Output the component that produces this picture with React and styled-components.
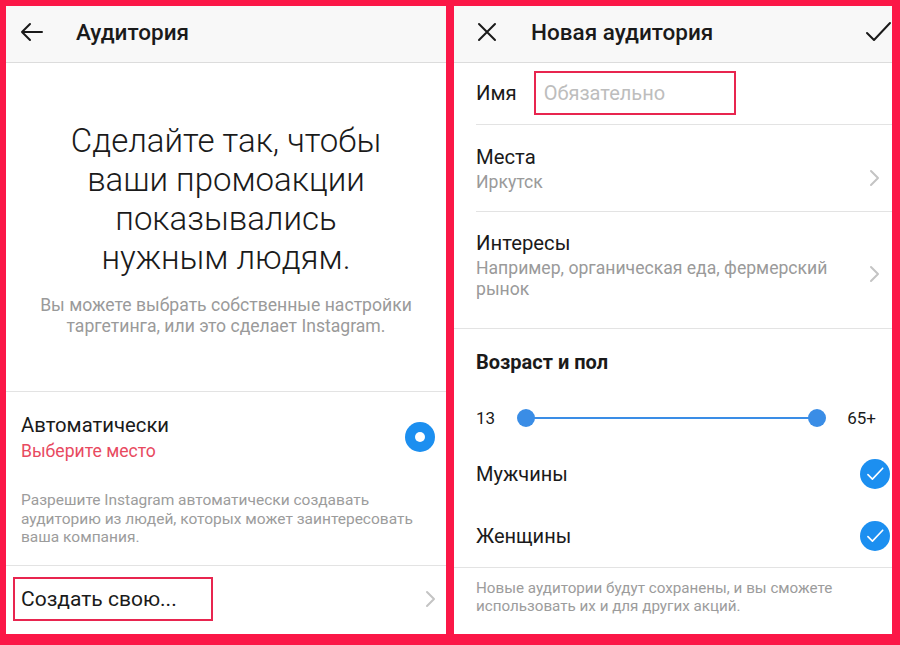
import React from 'react'
import styled, { createGlobalStyle } from 'styled-components'

const Global = createGlobalStyle`
  html, body { margin: 0; padding: 0; }
  body {
    background: #fb1747;
    font-family: Roboto, "Noto Sans", Arial, sans-serif;
    color: #262626;
  }
`

const Frame = styled.div`
  width: 900px;
  height: 645px;
  box-sizing: border-box;
  padding: 6px 8px 11px 6px;
  display: flex;
  gap: 8px;
  background: #fb1747;
`

const Panel = styled.div`
  width: ${(p) => p.w}px;
  background: #fff;
  display: flex;
  flex-direction: column;
  overflow: hidden;
`

const Header = styled.div`
  height: 57px;
  flex-shrink: 0;
  box-sizing: border-box;
  background: #f8f8f8;
  border-bottom: 1px solid #dcdcdc;
  display: flex;
  align-items: center;
  padding: 0 0 4px ${(p) => p.pl}px;
`

const Title = styled.div`
  font-size: 22.5px;
  font-weight: 500;
  color: #1a1a1a;
  margin-left: ${(p) => p.ml}px;
  flex: 1;
`

const Hero = styled.div`
  padding: 58px 16px 0;
  text-align: center;
  height: 329px;
  flex-shrink: 0;
  box-sizing: border-box;
  border-bottom: 1px solid #e3e3e3;
`

const Headline = styled.div`
  font-size: 33px;
  font-weight: 300;
  line-height: 39px;
  color: #1a1a1a;
  width: 340px;
  margin: 0 auto;
`

const Lead = styled.div`
  margin-top: 18px;
  font-size: 17.6px;
  line-height: 21px;
  color: #9a9a9a;
`

const AutoBlock = styled.div`
  height: 174px;
  flex-shrink: 0;
  box-sizing: border-box;
  padding: 20px 11px 0 15px;
  border-bottom: 1px solid #e3e3e3;
`

const AutoRow = styled.div`
  display: flex;
  align-items: center;
  justify-content: space-between;
`

const RowTitle = styled.div`
  font-size: ${(p) => p.size || 20.3}px;
  font-weight: ${(p) => (p.bold ? 700 : 400)};
  line-height: 26px;
  color: #1a1a1a;
`

const RowSub = styled.div`
  font-size: 17.6px;
  line-height: ${(p) => p.lh || 21}px;
  margin-top: ${(p) => p.mt || 0}px;
  color: ${(p) => (p.red ? '#e84a5f' : '#9a9a9a')};
`

const Note = styled.div`
  font-size: ${(p) => p.size || 15.5}px;
  line-height: ${(p) => p.lh || 18.5}px;
  color: #9c9c9c;
  margin-top: ${(p) => p.mt || 0}px;
  max-width: ${(p) => p.maxw || 'none'};
`

const Radio = styled.div`
  width: 30px;
  height: 30px;
  border-radius: 50%;
  background: #1c8ff0;
  display: flex;
  align-items: center;
  justify-content: center;
  &::after {
    content: '';
    width: 10px;
    height: 10px;
    border-radius: 50%;
    background: #fff;
  }
`

const LinkRow = styled.div`
  flex: 1;
  display: flex;
  align-items: center;
  justify-content: space-between;
  padding: 0 10px 2px 7px;
`

const Marked = styled.div`
  border: 2px solid #e8254f;
  box-sizing: border-box;
  width: ${(p) => p.w}px;
  height: ${(p) => p.h}px;
  display: flex;
  align-items: center;
  padding-left: ${(p) => p.pl}px;
  font-size: ${(p) => p.size}px;
  color: ${(p) => (p.muted ? '#bdbdbd' : '#1a1a1a')};
`

const NameRow = styled.div`
  height: 62px;
  flex-shrink: 0;
  box-sizing: border-box;
  margin-left: 22px;
  padding-bottom: 2px;
  border-bottom: 1px solid #e3e3e3;
  display: flex;
  align-items: center;
  gap: 17px;
`

const NavRow = styled.div`
  height: ${(p) => p.h}px;
  flex-shrink: 0;
  box-sizing: border-box;
  margin-left: ${(p) => (p.full ? 0 : 22)}px;
  padding-left: ${(p) => (p.full ? 22 : 0)}px;
  padding-top: ${(p) => p.pt}px;
  padding-right: 12px;
  border-bottom: 1px solid #e3e3e3;
  display: flex;
  align-items: flex-start;
  justify-content: space-between;
`

const NavText = styled.div`
  width: 370px;
`

const Chevron = styled.div`
  margin-top: ${(p) => p.mt || 0}px;
  display: flex;
`

const Section = styled.div`
  padding: 20px 16px 0 22px;
  height: 239px;
  flex-shrink: 0;
  box-sizing: border-box;
  border-bottom: 1px solid #e3e3e3;
`

const SliderRow = styled.div`
  display: flex;
  align-items: center;
  margin-top: 31px;
  height: 24px;
  font-size: 17px;
  color: #1a1a1a;
`

const Track = styled.div`
  position: relative;
  height: 2px;
  background: #3a8de6;
  margin: 0 30px 0 31px;
  flex: 1;
`

const Thumb = styled.span`
  position: absolute;
  top: -8px;
  ${(p) => (p.end ? 'right: -9px;' : 'left: -9px;')}
  width: 18px;
  height: 18px;
  border-radius: 50%;
  background: #3a8de6;
`

const GenderRow = styled.div`
  display: flex;
  align-items: center;
  justify-content: space-between;
  height: 30px;
  margin-top: ${(p) => p.mt}px;
  margin-right: -14px;
  font-size: 20px;
  color: #1a1a1a;
`

const Check = styled.div`
  width: 30px;
  height: 30px;
  border-radius: 50%;
  background: #1c8ff0;
  display: flex;
  align-items: center;
  justify-content: center;
`

const Footer = styled.div`
  padding: 11px 22px 0;
`

const Arrow = () => (
  <svg width="24" height="24" viewBox="0 0 24 24" fill="none" stroke="#1a1a1a" strokeWidth="2" strokeLinecap="round" strokeLinejoin="round">
    <path d="M22 12H2M10 4l-8 8 8 8" />
  </svg>
)

const Close = () => (
  <svg width="20" height="20" viewBox="0 0 20 20" fill="none" stroke="#1a1a1a" strokeWidth="2" strokeLinecap="round">
    <path d="M2 2l16 16M18 2L2 18" />
  </svg>
)

const Tick = ({ size = 28, color = '#1a1a1a', sw = 2 }) => (
  <svg width={size} height={size} viewBox="0 0 28 28" fill="none" stroke={color} strokeWidth={sw} strokeLinecap="round" strokeLinejoin="round">
    <path d="M3 15l7 7L26 5" />
  </svg>
)

const Chev = () => (
  <svg width="12" height="20" viewBox="0 0 12 20" fill="none" stroke="#c4c4c4" strokeWidth="2" strokeLinecap="round" strokeLinejoin="round">
    <path d="M3 3l7 7-7 7" />
  </svg>
)

export default function App() {
  return (
    <>
      <Global />
      <Frame>
        <Panel w={440}>
          <Header pl={14}>
            <Arrow />
            <Title ml={32}>Аудитория</Title>
          </Header>
          <Hero>
            <Headline>Сделайте так, чтобы ваши промоакции показывались нужным людям.</Headline>
            <Lead>Вы можете выбрать собственные настройки таргетинга, или это сделает Instagram.</Lead>
          </Hero>
          <AutoBlock>
            <AutoRow>
              <div>
                <RowTitle>Автоматически</RowTitle>
                <RowSub red lh={22} mt={2}>Выберите место</RowSub>
              </div>
              <Radio />
            </AutoRow>
            <Note mt={29} maxw="395px">
              Разрешите Instagram автоматически создавать аудиторию из людей, которых может заинтересовать ваша компания.
            </Note>
          </AutoBlock>
          <LinkRow>
            <Marked w={200} h={44} pl={6} size={21}>Создать свою...</Marked>
            <Chev />
          </LinkRow>
        </Panel>
        <Panel w={438}>
          <Header pl={23}>
            <Close />
            <Title ml={34}>Новая аудитория</Title>
            <Tick />
          </Header>
          <NameRow>
            <RowTitle>Имя</RowTitle>
            <Marked w={202} h={44} pl={8} size={20} muted>Обязательно</Marked>
          </NameRow>
          <NavRow h={87} pt={19}>
            <NavText>
              <RowTitle>Места</RowTitle>
              <RowSub lh={22} mt={1}>Иркутск</RowSub>
            </NavText>
            <Chevron mt={24}><Chev /></Chevron>
          </NavRow>
          <NavRow h={117} pt={18} full>
            <NavText>
              <RowTitle>Интересы</RowTitle>
              <RowSub mt={2}>Например, органическая еда, фермерский рынок</RowSub>
            </NavText>
            <Chevron mt={34}><Chev /></Chevron>
          </NavRow>
          <Section>
            <RowTitle size={20} bold>Возраст и пол</RowTitle>
            <SliderRow>
              <span>13</span>
              <Track>
                <Thumb />
                <Thumb end />
              </Track>
              <span>65+</span>
            </SliderRow>
            <GenderRow mt={29}>
              <span>Мужчины</span>
              <Check><Tick size={18} color="#fff" sw={2.5} /></Check>
            </GenderRow>
            <GenderRow mt={32}>
              <span>Женщины</span>
              <Check><Tick size={18} color="#fff" sw={2.5} /></Check>
            </GenderRow>
          </Section>
          <Footer>
            <Note size={15.2} lh={18}>Новые аудитории будут сохранены, и вы сможете использовать их и для других акций.</Note>
          </Footer>
        </Panel>
      </Frame>
    </>
  )
}
